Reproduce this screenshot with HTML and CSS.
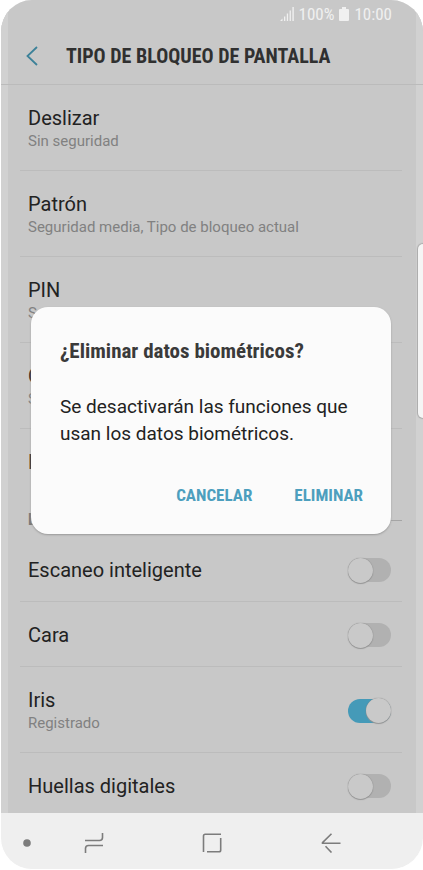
FILE: index.html
```html
<!DOCTYPE html>
<html lang="es">
<head>
    <meta charset="UTF-8">
    <meta name="viewport" content="width=device-width, initial-scale=1.0">
    <title>Tipo de bloqueo de pantalla</title>
    <link rel="stylesheet" href="styles.css">
</head>
<body>
    <div class="phone">
        <div class="screen">
            <div class="status-bar">
                <svg width="14" height="14" viewBox="0 0 14 14" fill="currentColor">
                    <path d="M0 14l2.500-2.500v2.500zM4 9.500h1.300v4.500h-1.300zM6.800 6.500h1.300v7.500h-1.300zM9.600 3.500h1.300v10.500h-1.300zM12.400 0h1.400v14h-1.400z"/>
                </svg>
                <span>100%</span>
                <svg width="10" height="14" viewBox="0 0 10 14" fill="currentColor">
                    <path d="M3 0h4v2h2q1 0 1 1v10q0 1-1 1H1q-1 0-1-1V3q0-1 1-1h2z"/>
                </svg>
                <span>10:00</span>
            </div>

            <header class="header">
                <button class="back" aria-label="Atrás">
                    <svg width="12" height="20" viewBox="0 0 12 20" fill="none" stroke="currentColor" stroke-width="1.800">
                        <path d="M11 1L1.500 10L11 19"/>
                    </svg>
                </button>
                <h1>TIPO DE BLOQUEO DE PANTALLA</h1>
            </header>

            <main class="list">
                <a class="row" href="#">
                    <span class="title">Deslizar</span>
                    <span class="sub">Sin seguridad</span>
                </a>
                <a class="row" href="#">
                    <span class="title">Patrón</span>
                    <span class="sub">Seguridad media, Tipo de bloqueo actual</span>
                </a>
                <a class="row" href="#">
                    <span class="title">PIN</span>
                    <span class="sub">Seguridad media-alta</span>
                </a>
                <a class="row" href="#">
                    <span class="title">Contraseña</span>
                    <span class="sub">Seguridad alta</span>
                </a>
                <a class="row last" href="#">
                    <span class="title">Ninguno</span>
                </a>

                <h2 class="section">Biométricos</h2>

                <div class="row switch-row">
                    <label for="smart">
                        <span class="title">Escaneo inteligente</span>
                    </label>
                    <input class="switch" type="checkbox" id="smart">
                </div>
                <div class="row switch-row">
                    <label for="face">
                        <span class="title">Cara</span>
                    </label>
                    <input class="switch" type="checkbox" id="face">
                </div>
                <div class="row switch-row">
                    <label for="iris">
                        <span class="title">Iris</span>
                        <span class="sub">Registrado</span>
                    </label>
                    <input class="switch" type="checkbox" id="iris" checked>
                </div>
                <div class="row switch-row last">
                    <label for="finger">
                        <span class="title">Huellas digitales</span>
                    </label>
                    <input class="switch" type="checkbox" id="finger">
                </div>
            </main>
        </div>

        <nav class="nav-bar">
            <button aria-label="Ocultar barra">
                <svg width="8" height="8" viewBox="0 0 8 8" fill="currentColor"><circle cx="4" cy="4" r="3.800"/></svg>
            </button>
            <button aria-label="Recientes">
                <svg width="20" height="22" viewBox="0 0 20 22" fill="none" stroke="currentColor" stroke-width="1.600">
                    <path d="M1 8.500H15.500Q18.500 8.500 18.500 5.500V1M19 13.500H4.500Q1.500 13.500 1.500 16.500V21"/>
                </svg>
            </button>
            <button aria-label="Inicio">
                <svg width="20" height="20" viewBox="0 0 20 20" fill="none" stroke="currentColor" stroke-width="1.600">
                    <path d="M1.500 19V3Q1.500 1.300 3.200 1.300H19M18.700 5V17Q18.700 18.800 17 18.800H5"/>
                </svg>
            </button>
            <button aria-label="Volver">
                <svg width="20" height="20" viewBox="0 0 20 20" fill="none" stroke="currentColor" stroke-width="1.600">
                    <path d="M10.500 .800L1.500 9.600V10.300H19.500M4.500 13.300L10.500 19.500"/>
                </svg>
            </button>
        </nav>

        <div class="edge-handle"></div>

        <dialog class="dialog" open>
            <h2>¿Eliminar datos biométricos?</h2>
            <p>Se desactivarán las funciones que usan los datos biométricos.</p>
            <div class="actions">
                <button>CANCELAR</button>
                <button>ELIMINAR</button>
            </div>
        </dialog>
    </div>
</body>
</html>
```

FILE: styles.css
```css
* {
    box-sizing: border-box;
}

body {
    margin: 0;
    background: #fff;
    font-family: Roboto, sans-serif;
    color: #222;
}

button {
    padding: 0;
    border: none;
    background: none;
    cursor: pointer;
}

svg {
    display: block;
}

/* Phone */
.phone {
    position: relative;
    display: flex;
    flex-direction: column;
    height: 100vh;
    border: solid #fff;
    border-width: 0 0 1px 1px;
    border-radius: 32px;
    overflow: hidden;
    background: #efefef;
}

/* Curved screen edges are slightly lighter */
.screen {
    flex: 1;
    min-height: 0;
    overflow: hidden;
    background: #c8c8c8;
    box-shadow: inset 7px 0 #d1d1d1, inset -7px 0 #d1d1d1;
}

.status-bar {
    display: flex;
    justify-content: flex-end;
    align-items: center;
    gap: 5px;
    height: 28px;
    padding-right: 31px;
    font-family: "Roboto Condensed", Roboto, sans-serif;
    font-size: 17px;
    color: #f0f0f0;
}

.header {
    display: flex;
    align-items: center;
    gap: 28px;
    height: 57px;
    padding-left: 25px;
    border-bottom: 1px solid #bbb;
}

.header .back {
    color: #3d8299;
}

.header h1 {
    margin: 0;
    font-family: "Roboto Condensed", Roboto, sans-serif;
    font-size: 20px;
    font-weight: 700;
    white-space: nowrap;
    color: #303030;
}

/* List */
.list {
    padding: 0 21px 0 19px;
}

.row {
    display: block;
    padding: 21px 8px 19px;
    border-bottom: 1px solid #bcbcbc;
    color: inherit;
    text-decoration: none;
}

.row.last {
    border-bottom: none;
}

.title,
.sub {
    display: block;
}

.title {
    font-size: 20px;
    line-height: 24px;
}

.sub {
    font-size: 15px;
    line-height: 20px;
    padding-top: 1px;
    color: #818181;
}

.section {
    display: flex;
    align-items: center;
    gap: 8px;
    margin: 13px 0 3px;
    padding-left: 8px;
    font-family: "Roboto Condensed", Roboto, sans-serif;
    font-size: 16px;
    line-height: 28px;
    color: #777;
}

.section::after {
    content: "";
    flex: 1;
    height: 1px;
    background: #a5a5a5;
}

.switch-row {
    display: flex;
    justify-content: space-between;
    align-items: center;
    padding-right: 11px;
}

.switch {
    appearance: none;
    display: flex;
    align-items: center;
    width: 43px;
    height: 24px;
    margin: 0;
    border-radius: 12px;
    background: #b1b1b1;
}

.switch::before {
    content: "";
    flex: none;
    width: 25px;
    height: 25px;
    border-radius: 50%;
    background: #c9c9c9;
    box-shadow: 0 0 1px #777, 0 1px 1px #999;
}

.switch:checked {
    justify-content: flex-end;
    background: #459ab8;
}

/* Navigation bar */
.nav-bar {
    display: grid;
    grid-template-columns: 12px repeat(3, 1fr);
    align-items: center;
    justify-items: center;
    height: 56px;
    padding: 3px 33px 0 22px;
    color: #7c7c7c;
}

.nav-bar button {
    color: inherit;
}

.nav-bar button:first-child {
    justify-self: start;
}

/* Edge panel handle */
.edge-handle {
    position: absolute;
    top: 244px;
    right: 0;
    width: 5px;
    height: 174px;
    border-radius: 6px 0 0 6px;
    background: #f5f5f5;
    box-shadow: 0 0 1px 1px #aaa;
}

/* Dialog */
.dialog {
    position: absolute;
    top: 307px;
    left: 30px;
    right: 32px;
    width: auto;
    margin: 0;
    padding: 30px 28px 26px 29px;
    border: none;
    border-radius: 17px;
    background: #fbfbfb;
    box-shadow: 0 1px 2px #999;
    color: #222;
}

.dialog h2 {
    margin: 0 0 28px;
    font-family: "Roboto Condensed", Roboto, sans-serif;
    font-size: 21px;
    line-height: 28px;
    color: #3a3a3a;
}

.dialog p {
    margin: 0;
    font-size: 19px;
    line-height: 27px;
}

.actions {
    display: flex;
    justify-content: flex-end;
    gap: 42px;
    margin-top: 35px;
}

.actions button {
    font-family: "Roboto Condensed", Roboto, sans-serif;
    font-size: 17px;
    font-weight: 700;
    line-height: 26px;
    color: #4d9fbe;
}
```
